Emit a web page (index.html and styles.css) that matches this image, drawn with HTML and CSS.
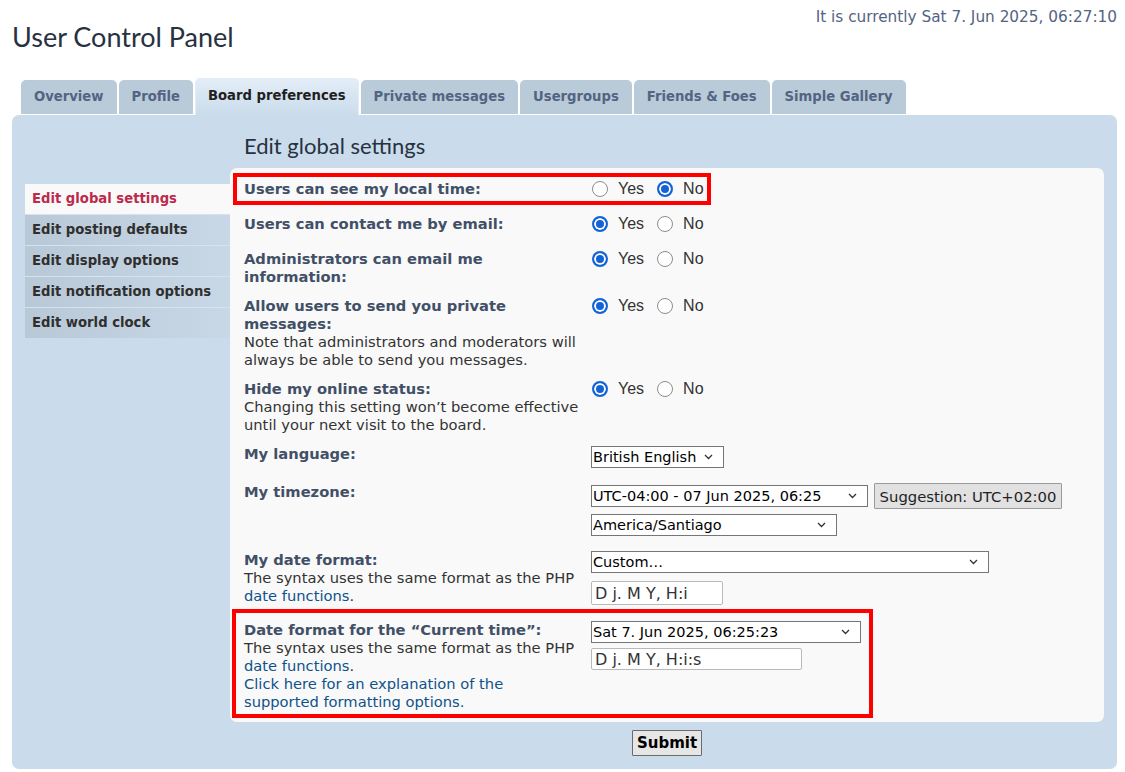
FILE: index.html
```html
<!DOCTYPE html>
<html lang="en">
<head>
<meta charset="utf-8">
<title>User Control Panel</title>
<link rel="stylesheet" href="styles.css">
</head>
<body>
<div class="page">
  <div class="header">
    <h1 class="title">User Control Panel</h1>
    <div class="clock">It is currently Sat 7. Jun 2025, 06:27:10</div>
  </div>

  <ul class="tabs">
    <li class="tab"><a href="#">Overview</a></li>
    <li class="tab"><a href="#">Profile</a></li>
    <li class="tab active"><a href="#">Board preferences</a></li>
    <li class="tab"><a href="#">Private messages</a></li>
    <li class="tab"><a href="#">Usergroups</a></li>
    <li class="tab"><a href="#">Friends &amp; Foes</a></li>
    <li class="tab"><a href="#">Simple Gallery</a></li>
  </ul>

  <div class="panel">
    <ul class="menu">
      <li class="menu-item active"><a href="#">Edit global settings</a></li>
      <li class="menu-item"><a href="#">Edit posting defaults</a></li>
      <li class="menu-item"><a href="#">Edit display options</a></li>
      <li class="menu-item"><a href="#">Edit notification options</a></li>
      <li class="menu-item"><a href="#">Edit world clock</a></li>
    </ul>

    <div class="main">
      <h2 class="heading">Edit global settings</h2>
      <form class="box">
        <div class="row mark-a">
          <div class="dt"><b>Users can see my local time:</b></div>
          <div class="dd">
            <div class="radios">
              <label class="opt"><input type="radio" name="r1" class="radio">Yes</label>
              <label class="opt"><input type="radio" name="r1" class="radio" checked>No</label>
            </div>
          </div>
        </div>

        <div class="row">
          <div class="dt"><b>Users can contact me by email:</b></div>
          <div class="dd">
            <div class="radios">
              <label class="opt"><input type="radio" name="r2" class="radio" checked>Yes</label>
              <label class="opt"><input type="radio" name="r2" class="radio">No</label>
            </div>
          </div>
        </div>

        <div class="row">
          <div class="dt"><b>Administrators can email me information:</b></div>
          <div class="dd">
            <div class="radios">
              <label class="opt"><input type="radio" name="r3" class="radio" checked>Yes</label>
              <label class="opt"><input type="radio" name="r3" class="radio">No</label>
            </div>
          </div>
        </div>

        <div class="row">
          <div class="dt"><b>Allow users to send you private messages:</b><br>Note that administrators and moderators will always be able to send you messages.</div>
          <div class="dd">
            <div class="radios">
              <label class="opt"><input type="radio" name="r4" class="radio" checked>Yes</label>
              <label class="opt"><input type="radio" name="r4" class="radio">No</label>
            </div>
          </div>
        </div>

        <div class="row">
          <div class="dt"><b>Hide my online status:</b><br>Changing this setting won’t become effective until your next visit to the board.</div>
          <div class="dd">
            <div class="radios">
              <label class="opt"><input type="radio" name="r5" class="radio" checked>Yes</label>
              <label class="opt"><input type="radio" name="r5" class="radio">No</label>
            </div>
          </div>
        </div>

        <div class="row">
          <div class="dt"><b>My language:</b></div>
          <div class="dd">
            <select class="sel sel-lang"><option>British English</option></select>
          </div>
        </div>

        <div class="row">
          <div class="dt"><b>My timezone:</b></div>
          <div class="dd">
            <div class="line">
              <select class="sel sel-tz"><option>UTC-04:00 - 07 Jun 2025, 06:25</option></select>
              <button type="button" class="suggest">Suggestion: UTC+02:00</button>
            </div>
            <select class="sel sel-zone"><option>America/Santiago</option></select>
          </div>
        </div>

        <div class="row">
          <div class="dt"><b>My date format:</b><br>The syntax uses the same format as the PHP <a href="#" class="link">date functions</a>.</div>
          <div class="dd">
            <select class="sel sel-custom"><option>Custom…</option></select>
            <input type="text" class="txt txt-date" value="D j. M Y, H:i">
          </div>
        </div>

        <div class="row mark-b">
          <div class="dt"><b>Date format for the “Current time”:</b><br>The syntax uses the same format as the PHP <a href="#" class="link">date functions</a>.<br><a href="#" class="link">Click here for an explanation of the supported formatting options.</a></div>
          <div class="dd">
            <select class="sel sel-cur"><option>Sat 7. Jun 2025, 06:25:23</option></select>
            <input type="text" class="txt txt-cur" value="D j. M Y, H:i:s">
          </div>
        </div>
      </form>
      <div class="submit-row"><button type="button" class="submit">Submit</button></div>
    </div>
  </div>
</div>
</body>
</html>
```

FILE: styles.css
```css
*, *::before, *::after { box-sizing: border-box; }

body {
  margin: 0;
  background: #ffffff;
  font-family: "DejaVu Sans", Verdana, sans-serif;
  font-size: 13px;
  color: #333333;
}

.page {
  padding: 0 8px 0 12px;
}

.header {
  display: flex;
  justify-content: space-between;
  align-items: flex-start;
}

.title {
  margin: 20px 0 0;
  font-family: Lato, "Open Sans", sans-serif;
  font-weight: normal;
  font-size: 27px;
  line-height: 33px;
  color: #28313f;
}

.clock {
  margin-top: 8px;
  font-size: 15.3px;
  line-height: 18px;
  color: #536482;
}

/* tabs */
.tabs {
  display: flex;
  align-items: flex-end;
  height: 37px;
  margin: 25px 0 0;
  padding: 0 0 0 9px;
  list-style: none;
}

.tab {
  margin: 0 2px 1px 0;
  height: 34px;
  border-radius: 5px 5px 0 0;
  background: #b9cad9;
}

.tab a {
  display: block;
  padding: 0 13px;
  line-height: 34px;
  font-weight: bold;
  font-size: 13.2px;
  color: #536482;
  text-decoration: none;
}

.tab.active {
  height: 37px;
  margin-bottom: 0;
  border: 1px solid #e4edf6;
  border-bottom: none;
  background: linear-gradient(#e3edf7, #cadceb);
}

.tab.active a {
  padding: 0 12px;
  line-height: 34px;
  color: #1f1f1f;
}

/* panel */
.panel {
  display: flex;
  align-items: flex-start;
  background: #cadceb;
  border-radius: 7px;
  padding: 0 13px 13px;
}

.menu {
  width: 205px;
  flex: none;
  margin: 69px 0 0;
  padding: 0;
  list-style: none;
}

.menu-item {
  border-top: 1px solid #d6e2ed;
  background: linear-gradient(to right, #b8c8d7, #c9d8e7);
}

.menu-item a {
  display: block;
  padding: 6px 7px;
  line-height: 18px;
  font-weight: bold;
  font-size: 13.2px;
  color: #2f2f2f;
  text-decoration: none;
}

.menu-item.active {
  border-top: none;
  background: #f9f9f9;
}

.menu-item.active a {
  color: #bc2a4d;
}

.main {
  flex: 1;
  min-width: 0;
}

.heading {
  margin: 0 0 10px;
  padding: 19px 0 0 14px;
  font-family: Lato, "Open Sans", sans-serif;
  font-weight: normal;
  font-size: 22px;
  line-height: 24px;
  color: #28313f;
}

.box {
  margin: 0;
  padding: 7px 0 5px;
  background: #f9f9f9;
  border-radius: 7px;
}

.row {
  position: relative;
  display: flex;
  align-items: flex-start;
  padding: 5px 14px 6px;
}

.dt {
  width: 347px;
  flex: none;
  padding-right: 11px;
  line-height: 18px;
  font-size: 14.7px;
  color: #333333;
}

.dt b {
  color: #425067;
}

.link {
  color: #105289;
  text-decoration: none;
}

.dd {
  display: flex;
  flex-direction: column;
  align-items: flex-start;
}

.radios {
  display: flex;
  align-items: center;
  height: 24px;
  padding-bottom: 6px;
}

.opt {
  display: inline-flex;
  align-items: center;
  font-family: "Liberation Sans", Arial, sans-serif;
  font-size: 16px;
  line-height: 18px;
  color: #333333;
}

.opt + .opt {
  margin-left: 13px;
}

.radio {
  appearance: none;
  -webkit-appearance: none;
  width: 16px;
  height: 16px;
  margin: 0 10px 0 1px;
  border: 1px solid #8d8d8d;
  border-radius: 50%;
  background: #ffffff;
}

.opt + .opt .radio {
  margin-left: 0;
}

.radio:checked {
  border: 2px solid #1463d6;
  background: #1463d6;
  box-shadow: inset 0 0 0 2px #ffffff;
}

.sel {
  display: block;
  appearance: none;
  -webkit-appearance: none;
  height: 22px;
  padding: 0 20px 0 1px;
  border: 1px solid #767676;
  border-radius: 0;
  background-color: #ffffff;
  background-image: url("data:image/svg+xml;utf8,<svg xmlns='http://www.w3.org/2000/svg' width='9' height='6' viewBox='0 0 9 6'><path d='M1 1 L4.5 4.5 L8 1' fill='none' stroke='%23333333' stroke-width='1.3'/></svg>");
  background-repeat: no-repeat;
  background-position: right 10px center;
  font-family: "DejaVu Sans", Verdana, sans-serif;
  font-size: 14.5px;
  line-height: 20px;
  color: #000000;
}

.sel-lang { width: 133px; margin: 1px 0 4px; }
.sel-tz { width: 277px; }
.sel-zone { width: 246px; margin: 5px 0 4px; }
.sel-custom { width: 398px; }
.sel-cur { width: 270px; }

.line {
  display: flex;
  align-items: center;
  height: 26px;
}

.suggest {
  height: 26px;
  margin-left: 6px;
  padding: 0 2px;
  width: 188px;
  border: 1px solid #9a9a9a;
  border-radius: 1px;
  background: #e1e1e1;
  font-family: "DejaVu Sans", Verdana, sans-serif;
  font-size: 14.8px;
  color: #1f1f1f;
  white-space: nowrap;
}

.txt {
  display: block;
  padding: 0 3px;
  border: 1px solid #b9b9b9;
  border-radius: 2px;
  background: #ffffff;
  font-family: "DejaVu Sans", Verdana, sans-serif;
  font-size: 16px;
  color: #333333;
}

.txt-date { width: 132px; height: 24px; margin: 8px 0 5px; }
.txt-cur { width: 211px; height: 22px; margin-top: 5px; }

.mark-a::after,
.mark-b::after {
  content: "";
  position: absolute;
  border: 4px solid #ff0000;
  pointer-events: none;
}

.mark-a::after {
  top: -2px;
  left: 3px;
  width: 478px;
  height: 32px;
}

.mark-b::after {
  top: -7px;
  left: 2px;
  width: 641px;
  height: 109px;
}

.submit-row {
  padding-top: 8px;
  text-align: center;
}

.submit {
  height: 26px;
  padding: 0 4px;
  border: 1px solid #6b6b6b;
  border-radius: 1px;
  background: #e6e6e6;
  font-family: "DejaVu Sans", Verdana, sans-serif;
  font-weight: bold;
  font-size: 15px;
  color: #000000;
}
```
